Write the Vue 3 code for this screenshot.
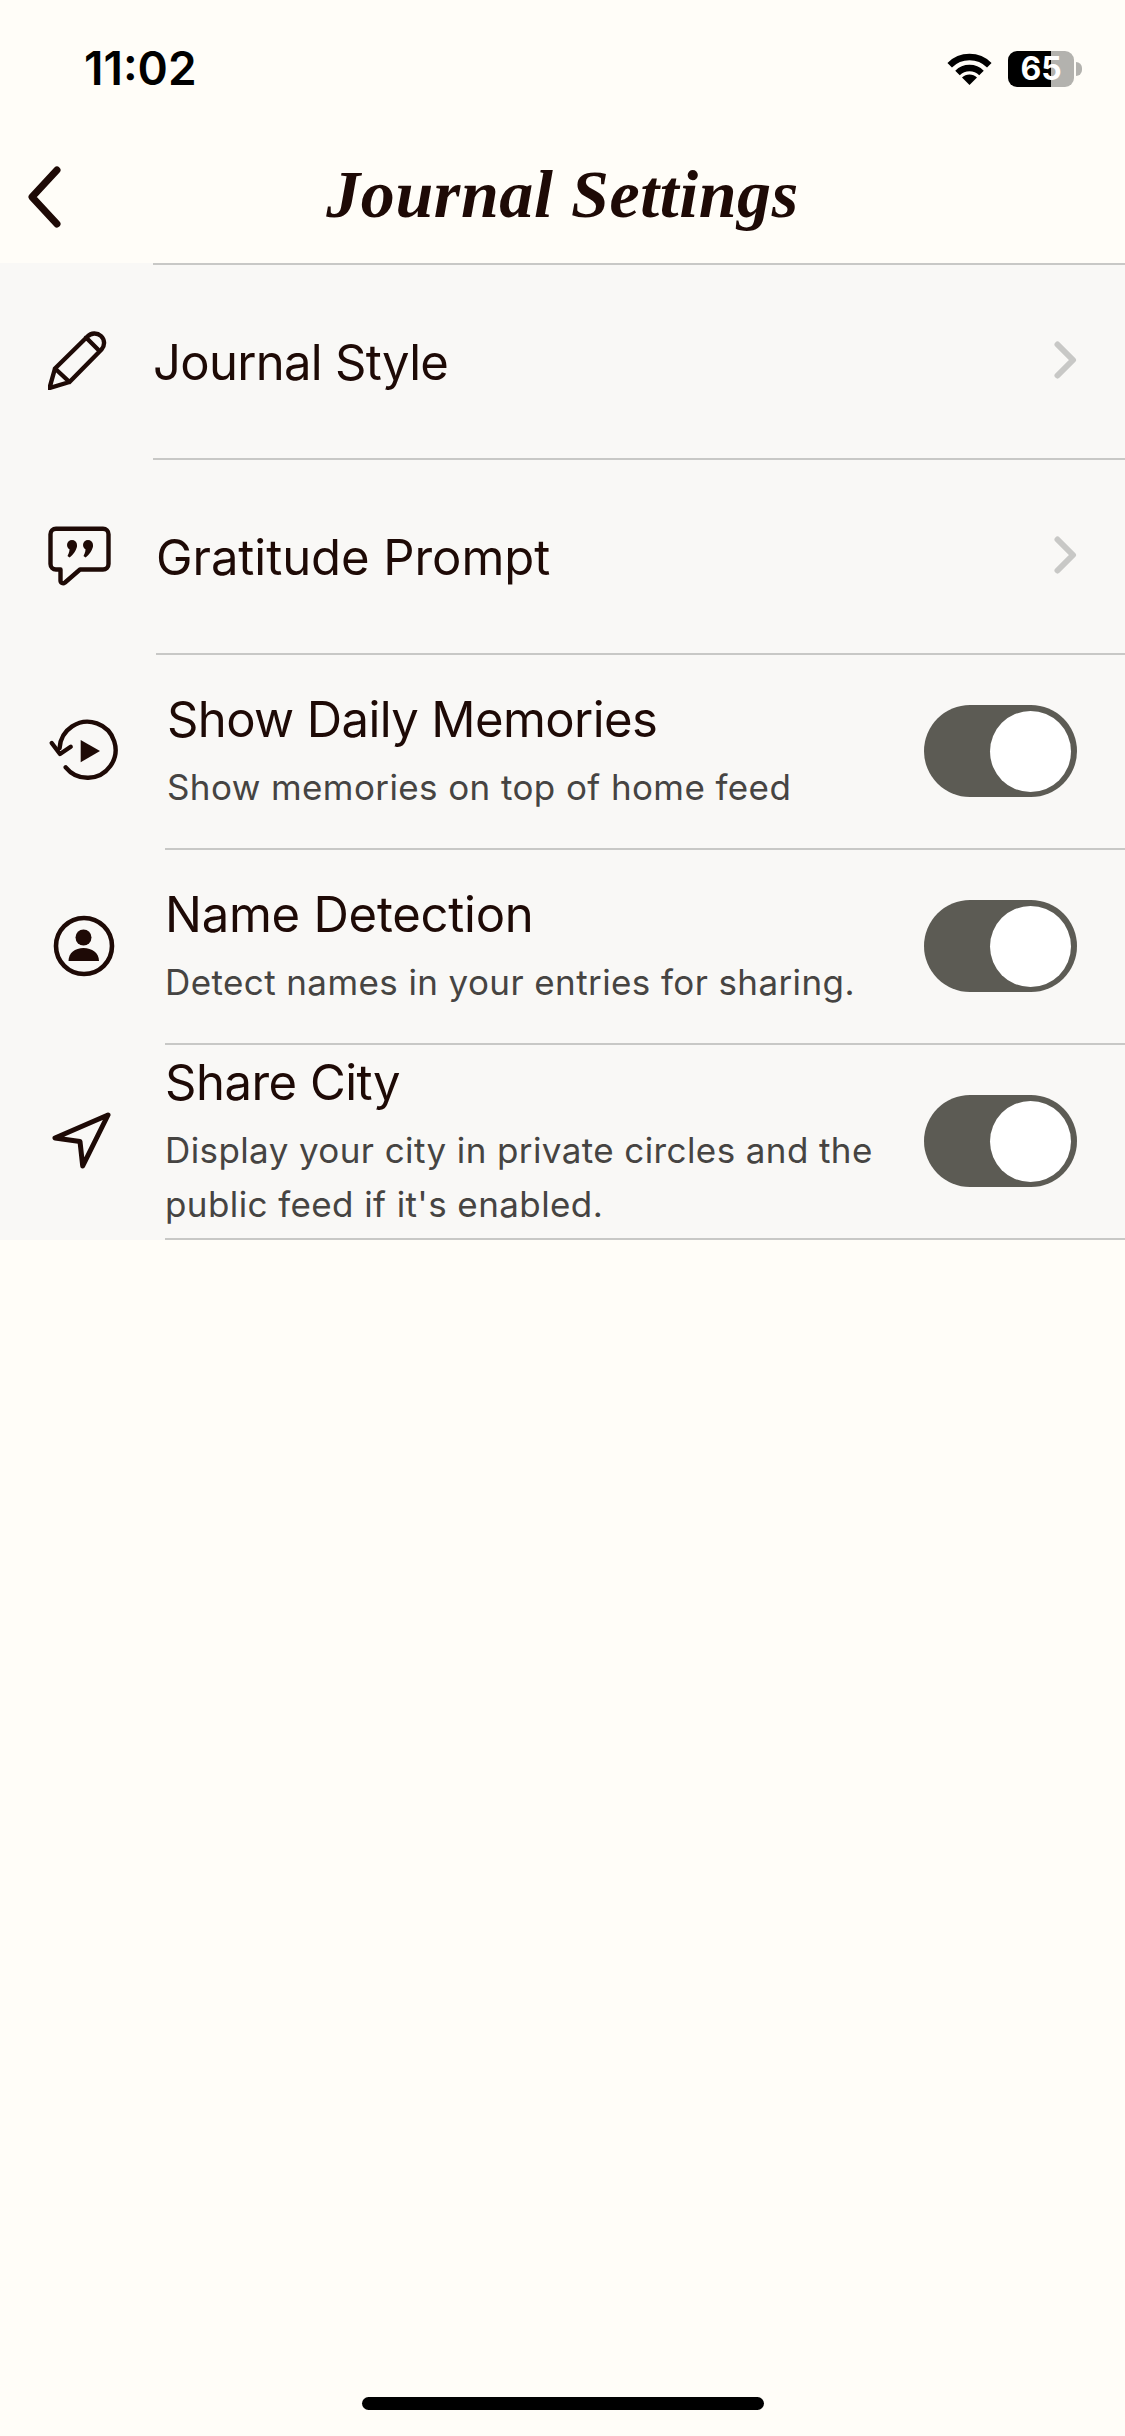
<template>
  <div class="page">
    <div class="status">
      <span class="time">11:02</span>
      <div class="status-right">
        <svg class="wifi" width="50" height="37" viewBox="0 0 50 37">
          <path d="M4.7 15.2A28 28 0 0 1 44.3 15.2M12.5 23A17 17 0 0 1 36.5 23" fill="none" stroke="#000" stroke-width="6.4" />
          <path d="M24.5 35L17 27.5A10.6 10.6 0 0 1 32 27.5Z" fill="#000" />
        </svg>
        <div class="battery"><span>65</span></div>
        <div class="battery-tip"></div>
      </div>
    </div>

    <div class="nav">
      <svg class="back" width="40" height="64" viewBox="0 0 40 64">
        <path d="M32 5L7 32L32 59" fill="none" stroke="#1e0a06" stroke-width="7" stroke-linecap="round" stroke-linejoin="round" />
      </svg>
      <h1 class="title">Journal Settings</h1>
    </div>

    <div class="list">
      <div v-for="r in rows" :key="r.title" class="row" :class="r.cls">
        <div class="icon">
          <svg v-if="r.icon === 'pencil'" width="60" height="60" viewBox="0 0 60 60" class="ic-pencil">
            <path d="M1.5 58L7 38.5L39.5 6.5A9.5 9.5 0 0 1 53.5 19.5L21.5 52Z M7 38.5L21.5 52 M38 7.5L51.5 21" fill="none" stroke="#1e0a06" stroke-width="4.4" stroke-linejoin="round" stroke-linecap="round" />
          </svg>
          <svg v-else-if="r.icon === 'quote'" width="65" height="62" viewBox="0 0 65 62" class="ic-quote">
            <path d="M9 3.8H56A5.5 5.5 0 0 1 61.5 9.3V39A5.5 5.5 0 0 1 56 44.5H33L18 57.5C16 59 13.5 58 13.5 55.5V44.5H9A5.5 5.5 0 0 1 3.5 39V9.3A5.5 5.5 0 0 1 9 3.8Z" fill="none" stroke="#1e0a06" stroke-width="4.4" stroke-linejoin="round" />
            <circle cx="25" cy="20" r="5" fill="#1e0a06" />
            <path d="M30 20C30 25 26 30 22.5 32.5L20.5 31C22 28 23 25 22.5 21Z" fill="#1e0a06" />
            <circle cx="41" cy="20" r="5" fill="#1e0a06" />
            <path d="M46 20C46 25 42 30 38.5 32.5L36.5 31C38 28 39 25 38.5 21Z" fill="#1e0a06" />
          </svg>
          <svg v-else-if="r.icon === 'replay'" width="74" height="66" viewBox="0 0 74 66" class="ic-replay">
            <path d="M17.7 49.3A28 28 0 1 0 11.6 30" fill="none" stroke="#1e0a06" stroke-width="4.4" stroke-linecap="round" />
            <path d="M3.7 25L12 36L22.7 28.7" fill="none" stroke="#1e0a06" stroke-width="4.4" stroke-linecap="round" stroke-linejoin="round" />
            <path d="M32.7 22L52 33L32.7 44.3Z" fill="#1e0a06" />
          </svg>
          <svg v-else-if="r.icon === 'person'" width="62" height="62" viewBox="0 0 62 62" class="ic-person">
            <circle cx="31" cy="31" r="28" fill="none" stroke="#1e0a06" stroke-width="4.6" />
            <circle cx="30.5" cy="22.5" r="8" fill="#1e0a06" />
            <path d="M15.5 46C15.5 38 22 33 30.5 33S46 38 46 46Z" fill="#1e0a06" />
          </svg>
          <svg v-else width="60" height="60" viewBox="0 0 60 60" class="ic-nav">
            <path d="M56 4L3 27L28 30.5L30.7 55Z" fill="none" stroke="#1e0a06" stroke-width="5" stroke-linejoin="round" />
          </svg>
        </div>
        <div class="body">
          <div class="text">
            <div class="row-title">{{ r.title }}</div>
            <div v-if="r.sub" class="row-sub">{{ r.sub }}</div>
          </div>
          <div v-if="r.toggle" class="toggle"><div class="knob"></div></div>
          <svg v-else class="chev" width="24" height="40" viewBox="0 0 24 40">
            <path d="M4.5 4.5L20 20L4.5 35.5" fill="none" stroke="#c8c8c6" stroke-width="6" stroke-linecap="round" stroke-linejoin="round" />
          </svg>
        </div>
      </div>
      <div class="list-end"></div>
    </div>

    <div class="home-bar"></div>
  </div>
</template>

<script setup>
const rows = [
  { title: 'Journal Style', icon: 'pencil', cls: 'r1' },
  { title: 'Gratitude Prompt', icon: 'quote', cls: 'r2' },
  { title: 'Show Daily Memories', sub: 'Show memories on top of home feed', icon: 'replay', toggle: true, cls: 'r3' },
  { title: 'Name Detection', sub: 'Detect names in your entries for sharing.', icon: 'person', toggle: true, cls: 'r4' },
  { title: 'Share City', sub: "Display your city in private circles and the public feed if it's enabled.", icon: 'nav', toggle: true, cls: 'r5' },
]
</script>

<style>
html, body { margin: 0; background: #fffdf8; }
</style>

<style scoped>
.page { width: 1125px; height: 2436px; background: #fffdf8; display: flex; flex-direction: column; color: #1e0a06; font-family: Inter, "Liberation Sans", sans-serif; overflow: hidden; }

.status { height: 110px; display: flex; justify-content: space-between; align-items: flex-start; box-sizing: border-box; padding: 40px 43px 0 84px; }
.time { font-size: 46px; font-weight: 600; line-height: 56px; color: #000; letter-spacing: 0; }
.status-right { display: flex; align-items: center; padding-top: 10px; }
.wifi { margin-right: 13px; }
.battery { width: 66px; height: 36px; border-radius: 9px; background: linear-gradient(90deg, #000 43px, #b3b2ae 43px); display: flex; align-items: center; justify-content: center; }
.battery span { color: #fff; font-size: 32px; font-weight: 700; line-height: 36px; letter-spacing: 0; }
.battery-tip { width: 6px; height: 14px; margin-left: 2px; background: #b3b2ae; border-radius: 0 7px 7px 0; }

.nav { height: 153px; position: relative; display: flex; justify-content: center; align-items: flex-start; box-sizing: border-box; }
.back { position: absolute; left: 25px; top: 55px; }
.title { margin: 44px 0 0; font-family: "Liberation Serif", serif; font-style: italic; font-weight: 700; font-size: 68px; line-height: 80px; color: #1e0a06; letter-spacing: 0.6px; }

.list { background: #f9f8f6; }
.row { height: 195px; display: flex; }
.icon { flex-shrink: 0; display: flex; align-items: flex-start; box-sizing: border-box; }
.body { flex: 1; min-width: 0; display: flex; align-items: center; justify-content: space-between; border-top: 2px solid #c8c8c6; box-sizing: border-box; padding-right: 48px; }
.toggle { flex-shrink: 0; width: 153px; height: 92px; border-radius: 46px; background: #5c5b54; box-sizing: border-box; padding: 6px; display: flex; justify-content: flex-end; margin-bottom: 2px; }
.knob { width: 81px; height: 81px; border-radius: 50%; background: #fff; }
.chev { flex-shrink: 0; margin-right: 0; margin-bottom: 4px; }

.row-title { font-size: 49px; line-height: 60px; color: #1e0a06; letter-spacing: -0.35px; }
.row-sub { font-size: 35px; line-height: 54px; color: #464442; letter-spacing: 0.4px; margin-top: 10px; }
.text { max-width: 730px; }

.r1 .icon, .r2 .icon { width: 153px; }
.r3 .icon { width: 156px; }
.r4 .icon, .r5 .icon { width: 165px; }
.r1 .text { padding: 3px 0 0; }
.r2 .text { padding: 3px 0 0 3px; }
.r3 .text { padding-left: 11px; }
.r1 .row-title { letter-spacing: -0.7px; }
.r2 .row-title { letter-spacing: -0.05px; }
.r3 .row-title { letter-spacing: -0.6px; }
.r4 .row-title { letter-spacing: -0.25px; }
.r5 .row-title { letter-spacing: -0.5px; }

.ic-pencil { margin: 67px 0 0 48px; }
.ic-quote { margin: 67px 0 0 47px; }
.ic-replay { margin: 65px 0 0 48px; }
.ic-person { margin: 67px 0 0 53px; }
.ic-nav { margin: 68px 0 0 52px; }

.list-end { height: 2px; margin-left: 165px; background: #c8c8c6; }

.home-bar { width: 402px; height: 13px; border-radius: 7px; background: #000; margin: auto auto 26px; }
</style>
